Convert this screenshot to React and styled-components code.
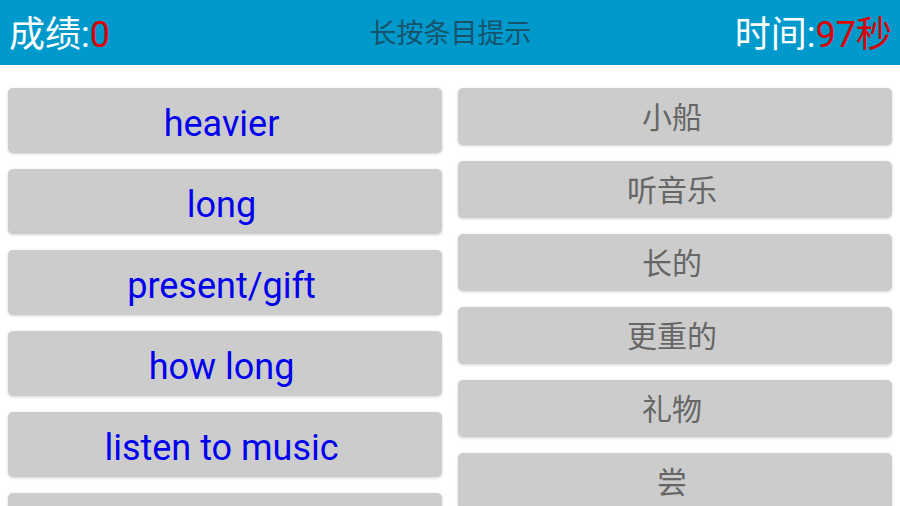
import React from "react";
import styled, { createGlobalStyle } from "styled-components";

const GlobalStyle = createGlobalStyle`
  body {
    margin: 0;
    background: #ffffff;
    font-family: Roboto, "Noto Sans CJK SC", sans-serif;
  }
`;

const Header = styled.div`
  height: 65px;
  box-sizing: border-box;
  background-color: #0099cc;
  display: flex;
  align-items: center;
  justify-content: space-between;
  padding: 0 8px 3px 9px;
`;

const Stat = styled.div`
  font-size: 36px;
  color: #ffffff;
  width: 180px;
  text-align: ${(props) => props.$align || "left"};
`;

const Red = styled.span`
  color: #dd0000;
`;

const Hint = styled.div`
  font-size: 27px;
  color: #17536b;
`;

const Board = styled.div`
  display: grid;
  grid-template-columns: 1fr 1fr;
  column-gap: 16px;
  padding: 23px 8px 0;
`;

const Column = styled.div`
  display: flex;
  flex-direction: column;
  gap: 16px;
`;

const Card = styled.div`
  height: ${(props) => (props.$word ? "65px" : "57px")};
  box-sizing: border-box;
  padding: ${(props) => (props.$word ? "6px 7px 0 0" : "0 6px 4px 0")};
  background-color: #cccccc;
  border-radius: 5px;
  box-shadow: 0 1px 3px rgba(0, 0, 0, 0.18);
  display: flex;
  align-items: center;
  justify-content: center;
  font-size: ${(props) => (props.$word ? "36px" : "30px")};
  color: ${(props) => (props.$word ? "#0000ee" : "#666666")};
`;

const words = [
  "heavier",
  "long",
  "present/gift",
  "how long",
  "listen to music",
  "",
];

const meanings = ["小船", "听音乐", "长的", "更重的", "礼物", "尝"];

export default function App() {
  return (
    <>
      <GlobalStyle />
      <Header>
        <Stat>
          成绩:<Red>0</Red>
        </Stat>
        <Hint>长按条目提示</Hint>
        <Stat $align="right">
          时间:<Red>97秒</Red>
        </Stat>
      </Header>
      <Board>
        <Column>
          {words.map((w, i) => (
            <Card $word key={i}>
              {w}
            </Card>
          ))}
        </Column>
        <Column>
          {meanings.map((m, i) => (
            <Card key={i}>{m}</Card>
          ))}
        </Column>
      </Board>
    </>
  );
}
